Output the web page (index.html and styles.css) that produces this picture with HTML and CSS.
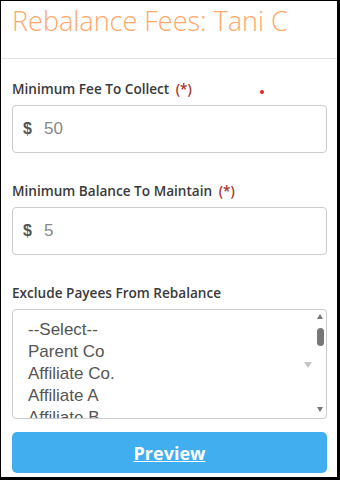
FILE: index.html
```html
<!DOCTYPE html>
<html lang="en">
<head>
    <meta charset="UTF-8">
    <meta name="viewport" content="width=device-width, initial-scale=1.0">
    <title>Rebalance Fees</title>
    <link rel="stylesheet" href="styles.css">
</head>
<body>
    <div class="page">
        <div class="header">
            <h1 class="title">Rebalance Fees: Tani C</h1>
        </div>
        <div class="form">
            <div class="field first">
                <label class="label">Minimum Fee To Collect <span class="req">(*)</span></label>
                <span class="dot"></span>
                <div class="money">
                    <span class="cur">$</span>
                    <span class="val">50</span>
                </div>
            </div>
            <div class="field">
                <label class="label">Minimum Balance To Maintain <span class="req">(*)</span></label>
                <div class="money">
                    <span class="cur">$</span>
                    <span class="val">5</span>
                </div>
            </div>
            <div class="field">
                <label class="label">Exclude Payees From Rebalance</label>
                <div class="listbox">
                    <div class="options">
                        <div>--Select--</div>
                        <div>Parent Co</div>
                        <div>Affiliate Co.</div>
                        <div>Affiliate A</div>
                        <div>Affiliate B</div>
                        <div>Affiliate C</div>
                    </div>
                    <span class="caret"></span>
                    <div class="scroll">
                        <span class="up"></span>
                        <span class="thumb"></span>
                        <span class="down"></span>
                    </div>
                </div>
            </div>
            <button class="preview">Preview</button>
        </div>
    </div>
</body>
</html>
```
FILE: styles.css
```css
body {
    margin: 0;
    font-family: "Open Sans", Arial, sans-serif;
    background: #fff;
}
.page {
    width: 340px;
    height: 480px;
    box-sizing: border-box;
    border-style: solid;
    border-color: #000;
    border-width: 1px 3px 3px 1px;
    overflow: hidden;
}
.header {
    height: 57px;
    border-bottom: 1px solid #e3e3e3;
    padding: 0 11px;
}
.title {
    margin: 0;
    font-weight: 300;
    font-size: 27px;
    line-height: 40px;
    color: #ffa86b;
}
.form {
    padding: 0 10px 0 11px;
}
.field {
    position: relative;
    margin-top: 29px;
}
.field.first {
    margin-top: 21px;
}
.label {
    display: block;
    font-size: 13.6px;
    font-weight: 600;
    color: #3a3a3a;
    line-height: 18px;
    margin-bottom: 7px;
}
.req {
    color: #a9332a;
    margin-left: 3px;
}
.dot {
    position: absolute;
    left: 248px;
    top: 10px;
    width: 4px;
    height: 4px;
    border-radius: 50%;
    background: #e52222;
}
.money {
    display: flex;
    align-items: center;
    height: 46px;
    border: 1px solid #ccc;
    border-radius: 4px;
    padding-left: 10px;
    font-family: "Liberation Sans", Arial, sans-serif;
}
.cur {
    font-weight: bold;
    font-size: 16px;
    color: #555;
    width: 21px;
}
.val {
    font-size: 17px;
    color: #888;
}
.listbox {
    position: relative;
    display: flex;
    height: 108px;
    border: 1px solid #ccc;
    border-radius: 4px;
    overflow: hidden;
}
.options {
    flex: 1;
    padding: 9px 0 0 15px;
    font-family: "Liberation Sans", Arial, sans-serif;
    font-size: 17px;
    line-height: 22px;
    color: #555;
}
.caret {
    position: absolute;
    left: 291px;
    top: 52px;
    border-left: 4px solid transparent;
    border-right: 4px solid transparent;
    border-top: 6px solid #c4c4c4;
}
.scroll {
    width: 12px;
    display: flex;
    flex-direction: column;
    align-items: center;
    padding: 4px 0 6px;
}
.up {
    border-left: 3px solid transparent;
    border-right: 3px solid transparent;
    border-bottom: 5px solid #777;
}
.thumb {
    width: 7px;
    height: 18px;
    border-radius: 4px;
    background: #777;
    margin-top: 9px;
}
.down {
    margin-top: auto;
    border-left: 3px solid transparent;
    border-right: 3px solid transparent;
    border-top: 5px solid #777;
}
.preview {
    display: block;
    width: 100%;
    height: 41px;
    margin-top: 13px;
    border: none;
    border-radius: 5px;
    background: #40aeef;
    color: #fff;
    font-family: "Open Sans", Arial, sans-serif;
    font-size: 18px;
    font-weight: 700;
    text-decoration: underline;
    cursor: pointer;
}
```
